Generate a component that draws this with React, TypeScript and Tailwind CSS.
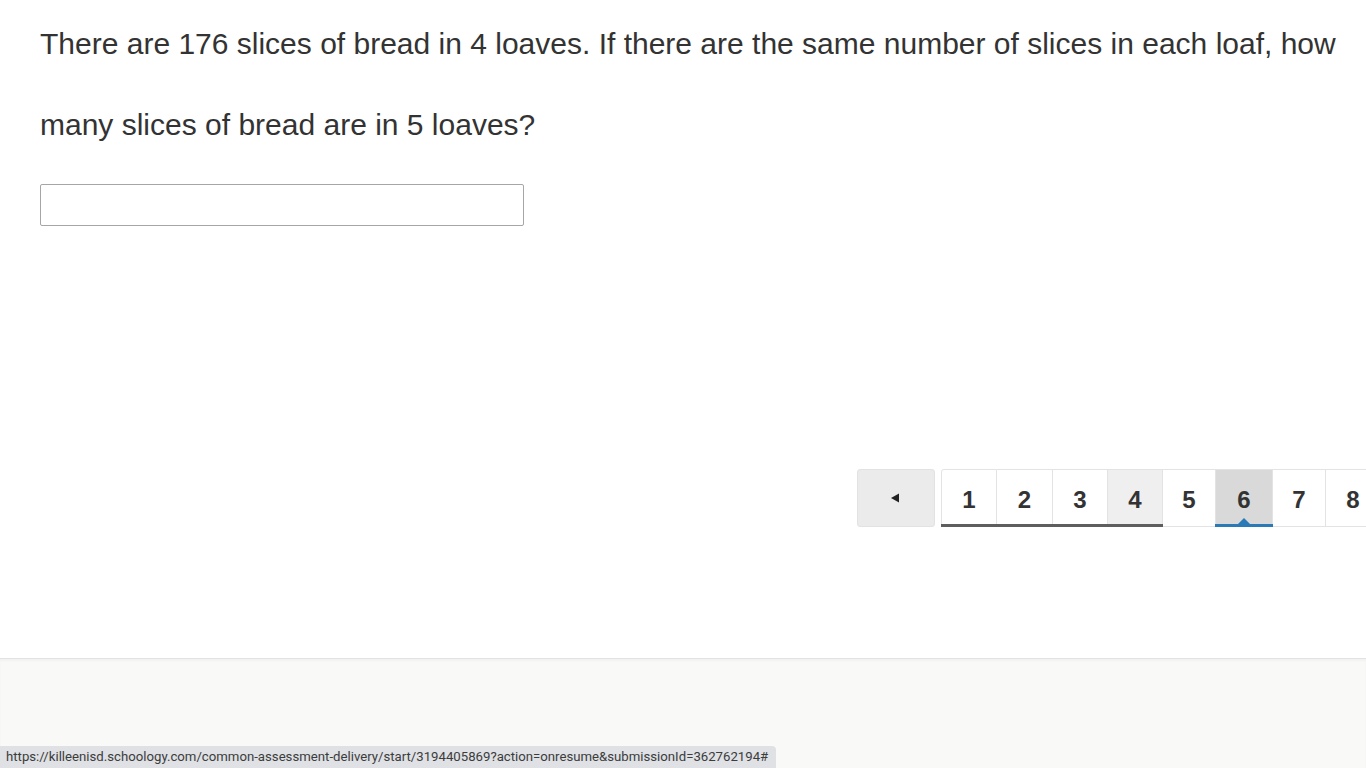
import React from 'react';

const pages = [
  { n: 1, w: 'w-[56px]', done: true, bg: 'bg-white' },
  { n: 2, w: 'w-[56px]', done: true, bg: 'bg-white' },
  { n: 3, w: 'w-[55px]', done: true, bg: 'bg-white' },
  { n: 4, w: 'w-[55px]', done: true, bg: 'bg-[#efefef]' },
  { n: 5, w: 'w-[53px]', done: false, bg: 'bg-white' },
  { n: 6, w: 'w-[57px]', done: false, bg: 'bg-[#d9d9d9]', current: true },
  { n: 7, w: 'w-[53px]', done: false, bg: 'bg-white' },
  { n: 8, w: 'w-[55px]', done: false, bg: 'bg-white' },
  { n: 9, w: 'w-[55px]', done: false, bg: 'bg-white' },
];

export default function App() {
  return (
    <div className="flex h-[768px] w-[1366px] flex-col overflow-hidden bg-white font-['Liberation_Sans',Arial,sans-serif]">
      <main className="flex h-[658px] shrink-0 flex-col pl-10 pr-6 pt-[3px]">
        <p className="text-[30px] leading-[81px] text-[#333333]">
          There are 176 slices of bread in 4 loaves. If there are the same number of slices in each loaf, how many slices of bread are in 5 loaves?
        </p>
        <input
          type="text"
          className="mt-[19px] h-[42px] w-[484px] shrink-0 rounded-[2px] border border-[#a6a6a6] bg-white px-2 text-lg outline-none"
        />

        <div className="ml-[817px] mt-[243px] flex h-[58px] shrink-0 items-stretch">
          <button className="flex w-[78px] shrink-0 items-center justify-center rounded-[3px] border border-[#e2e2e2] bg-[#ebebeb] pr-[3px]">
            <svg width="10" height="10" viewBox="0 0 10 10">
              <path d="M1 5 L9 0.5 L9 9.5 Z" fill="#222" />
            </svg>
          </button>
          <div className="ml-[6px] flex shrink-0">
            {pages.map((p, i) => (
              <div
                key={p.n}
                className={`relative flex shrink-0 items-center justify-center border-y border-r border-[#e3e3e3] pt-[3px] ${p.w} ${p.bg} ${i === 0 ? 'rounded-tl-[3px] border-l' : ''}`}
              >
                <span className="text-[24px] font-bold text-[#333333]">{p.n}</span>
                {p.done && <span className="absolute -bottom-px -left-px -right-px h-[3px] bg-[#5e5e5e]" />}
                {p.current && (
                  <>
                    <span className="absolute -bottom-px -left-px -right-px h-[3px] bg-[#2a7ab8]" />
                    <span className="absolute bottom-[2px] left-1/2 h-0 w-0 -translate-x-1/2 border-x-[6px] border-b-[6px] border-x-transparent border-b-[#2a7ab8]" />
                  </>
                )}
              </div>
            ))}
          </div>
        </div>
      </main>

      <footer className="relative flex flex-1 flex-col justify-end border-t border-[#e2e2e2] bg-[#f9f9f8] shadow-[inset_0_2px_2px_rgba(0,0,0,0.03)]">
        <div className="flex h-[22px] w-[776px] items-center rounded-tr-[4px] bg-[#dfe1e5] pl-[6px] font-['Roboto',sans-serif] text-[13.2px] text-[#3c3c3c]">
          https://killeenisd.schoology.com/common-assessment-delivery/start/3194405869?action=onresume&amp;submissionId=362762194#
        </div>
      </footer>
    </div>
  );
}
